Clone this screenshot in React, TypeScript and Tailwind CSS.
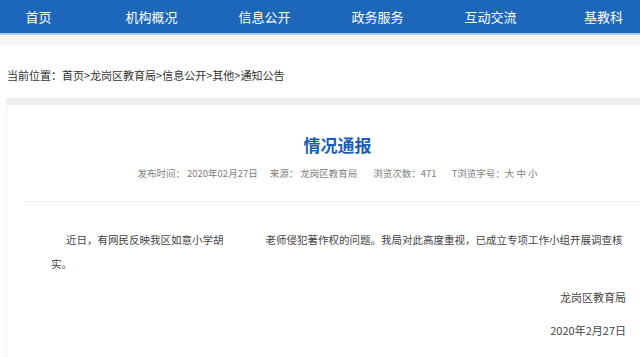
import React from "react";

const navItems = ["首页", "机构概况", "信息公开", "政务服务", "互动交流", "基教科"];

export default function App() {
  return (
    <div
      className="w-[640px] h-[357px] overflow-hidden bg-white"
      style={{ fontFamily: '"Noto Sans CJK SC", "Noto Sans", sans-serif' }}
    >
      <nav className="h-[33px] bg-[#1c67ba] flex items-center">
        <div className="flex ml-[-18px]">
          {navItems.map((n) => (
            <div key={n} className="w-[113px] shrink-0 text-center text-white text-[13px] leading-[33px]">
              {n}
            </div>
          ))}
        </div>
      </nav>
      <div className="h-[2px] bg-[#a8cbea]" />
      <div className="h-[11px] bg-[#f8f4f3]" />
      <div className="h-[52px] pt-[6px] flex items-center pl-[7px] text-[11px] text-[#333]">
        当前位置：首页&gt;龙岗区教育局&gt;信息公开&gt;其他&gt;通知公告
      </div>
      <div className="ml-[6px] w-[662px] border-l border-[#f2f2f2] h-[300px]">
        <div className="h-[7px] bg-[#efefef]" />
        <h1 className="mt-[28px] text-center text-[17px] leading-[24px] font-bold text-[#1b5fb0]">情况通报</h1>
        <div className="mt-[8px] flex justify-center text-[9.5px] leading-[16px] text-[#808080] whitespace-pre">
          <span>发布时间： 2020年02月27日</span>
          <span className="ml-[12px]">来源： 龙岗区教育局</span>
          <span className="ml-[16px]">浏览次数：471</span>
          <span className="ml-[15px]">T浏览字号：大 中 小</span>
        </div>
        <div className="mt-[20px] ml-[18px] h-px bg-[#ececec]" />
        <p className="mt-[26px] pl-[44px] pr-[38px] text-[10.5px] leading-[24px] text-[#444] indent-[15px]">
          近日，有网民反映我区如意小学胡<span className="inline-block w-[42px]" />老师侵犯著作权的问题。我局对此高度重视，已成立专项工作小组开展调查核实。
        </p>
        <div className="mt-[9px] pr-[42px] text-right text-[11px] leading-[24px] text-[#444]">龙岗区教育局</div>
        <div className="mt-[9px] pr-[42px] text-right text-[11px] leading-[24px] text-[#444]">2020年2月27日</div>
      </div>
    </div>
  );
}
